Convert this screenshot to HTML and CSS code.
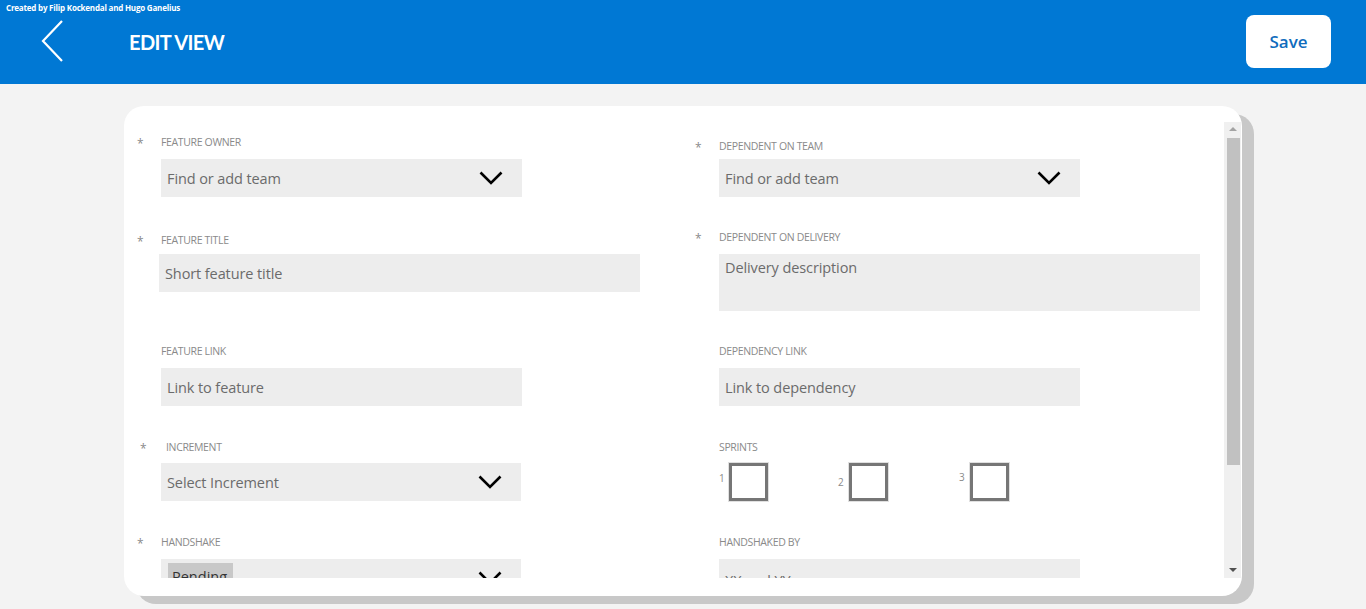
FILE: index.html
```html
<!DOCTYPE html>
<html>
<head>
<meta charset="utf-8">
<link rel="stylesheet" href="styles.css">
</head>
<body>
<header class="topbar">
  <div class="credit">Created by Filip Kockendal and Hugo Ganelius</div>
  <div class="topbar-row">
    <svg class="back" width="40" height="44" viewBox="0 0 40 44"><polyline points="21,1 2,21 21,41" fill="none" stroke="#fff" stroke-width="2.2"/></svg>
    <h1 class="title">EDIT VIEW</h1>
    <button class="save">Save</button>
  </div>
</header>
<main class="page">
  <section class="card">
    <div class="scroll">
      <div class="content">
        <div class="col">
          <div class="field f-owner">
            <div class="label-row"><span class="req">*</span><span class="label">FEATURE OWNER</span></div>
            <div class="box dd"><span class="ph">Find or add team</span><svg class="chev" width="24" height="14" viewBox="0 0 24 14"><polyline points="1.5,1.5 12,12 22.5,1.5" fill="none" stroke="#000" stroke-width="2.6"/></svg></div>
          </div>
          <div class="field f-title">
            <div class="label-row"><span class="req">*</span><span class="label">FEATURE TITLE</span></div>
            <div class="box wide shift"><span class="ph">Short feature title</span></div>
          </div>
          <div class="field f-link">
            <div class="label-row"><span class="req"></span><span class="label">FEATURE LINK</span></div>
            <div class="box"><span class="ph">Link to feature</span></div>
          </div>
          <div class="field f-inc">
            <div class="label-row"><span class="req req-inc">*</span><span class="label label-inc">INCREMENT</span></div>
            <div class="box dd narrow"><span class="ph">Select Increment</span><svg class="chev" width="24" height="14" viewBox="0 0 24 14"><polyline points="1.5,1.5 12,12 22.5,1.5" fill="none" stroke="#000" stroke-width="2.6"/></svg></div>
          </div>
          <div class="field f-hs">
            <div class="label-row"><span class="req">*</span><span class="label">HANDSHAKE</span></div>
            <div class="box dd narrow clip"><span class="chip">Pending</span><svg class="chev chev-hs" width="24" height="14" viewBox="0 0 24 14"><polyline points="1.5,1.5 12,12 22.5,1.5" fill="none" stroke="#000" stroke-width="2.6"/></svg></div>
          </div>
        </div>
        <div class="col">
          <div class="field r-team">
            <div class="label-row"><span class="req">*</span><span class="label">DEPENDENT ON TEAM</span></div>
            <div class="box dd"><span class="ph">Find or add team</span><svg class="chev" width="24" height="14" viewBox="0 0 24 14"><polyline points="1.5,1.5 12,12 22.5,1.5" fill="none" stroke="#000" stroke-width="2.6"/></svg></div>
          </div>
          <div class="field r-del">
            <div class="label-row"><span class="req">*</span><span class="label">DEPENDENT ON DELIVERY</span></div>
            <div class="box wide tall"><span class="ph">Delivery description</span></div>
          </div>
          <div class="field r-link">
            <div class="label-row"><span class="req"></span><span class="label">DEPENDENCY LINK</span></div>
            <div class="box"><span class="ph">Link to dependency</span></div>
          </div>
          <div class="field r-spr">
            <div class="label-row"><span class="req"></span><span class="label">SPRINTS</span></div>
            <div class="sprints">
              <div class="sprint s1"><span class="num">1</span><span class="check"></span></div>
              <div class="sprint s2"><span class="num">2</span><span class="check"></span></div>
              <div class="sprint s3"><span class="num">3</span><span class="check"></span></div>
            </div>
          </div>
          <div class="field r-hs">
            <div class="label-row"><span class="req"></span><span class="label">HANDSHAKED BY</span></div>
            <div class="box clip"><span class="ph ph-hs">XX and YY</span></div>
          </div>
        </div>
      </div>
      <div class="scrollbar">
        <span class="arrow up"></span>
        <span class="thumb"></span>
        <span class="spacer"></span>
        <span class="arrow down"></span>
      </div>
    </div>
  </section>
</main>
</body>
</html>
```

FILE: styles.css
```css
* { box-sizing: border-box; }
html, body { margin: 0; padding: 0; }
body {
  width: 1366px;
  height: 609px;
  overflow: hidden;
  background: #f3f3f3;
  font-family: "Open Sans", "Noto Sans", sans-serif;
}
.topbar {
  height: 84px;
  background: #0078d4;
  color: #fff;
  position: relative;
}
.credit {
  position: absolute;
  left: 6px;
  top: 2px;
  font-size: 8px;
  font-weight: 700;
  letter-spacing: -0.2px;
}
.topbar-row {
  display: flex;
  align-items: center;
  height: 84px;
  padding-left: 41px;
  padding-right: 35px;
}
.back { display: block; margin-top: 0; }
.title {
  margin: 0 0 0 48px;
  font-family: Lato, sans-serif;
  font-weight: 700;
  font-size: 20px;
  letter-spacing: -0.6px;
  flex: 1;
}
.save {
  width: 85px;
  height: 53px;
  margin-top: -1px;
  border: none;
  border-radius: 8px;
  background: #fff;
  color: #0f6cbd;
  font-family: "Open Sans", sans-serif;
  font-weight: 600;
  font-size: 17px;
  padding: 0;
}
.page { padding: 22px 0 0 124px; }
.card {
  width: 1118px;
  height: 490px;
  background: #fff;
  border-radius: 20px;
  box-shadow: 12px 8px 0 #c8c8c8;
  padding: 16px 1px 18px 0;
}
.scroll {
  display: flex;
  height: 456px;
}
.content {
  flex: 1;
  min-width: 0;
  overflow: hidden;
  display: flex;
  padding-left: 13px;
}
.col {
  width: 558px;
  flex: none;
  display: flex;
  flex-direction: column;
}
.field { display: flex; flex-direction: column; }
.label-row {
  height: 12px;
  display: flex;
  align-items: center;
  margin-bottom: 11px;
}
.req {
  width: 24px;
  color: #8a8a8a;
  font-size: 12px;
  line-height: 12px;
  padding-top: 4px;
}
.req-inc { width: 29px; padding-left: 3px; }
.label {
  font-size: 10.5px;
  color: #8a8a8a;
  letter-spacing: -0.35px;
  line-height: 12px;
}
.box {
  margin-left: 24px;
  width: 361px;
  height: 38px;
  background: #ededed;
  display: flex;
  align-items: center;
  padding-left: 6px;
  padding-right: 19px;
  position: relative;
}
.box.narrow { width: 360px; }
.box.wide { width: 481px; }
.box.shift { margin-left: 22px; }
.box.tall { height: 57px; align-items: flex-start; padding-top: 4px; }
.ph {
  font-size: 14.5px;
  color: #6b6b6b;
  flex: 1;
  letter-spacing: -0.1px;
}
.dd .chev { flex: none; }
.f-owner { margin-top: 14px; }
.f-title { margin-top: 37px; }
.f-title .label-row { margin-bottom: 8px; }
.f-link { margin-top: 53px; }
.f-inc { margin-top: 35px; }
.f-inc .label-row { margin-bottom: 10px; }
.f-hs { margin-top: 35px; }
.r-team { margin-top: 18px; }
.r-team .label-row { margin-bottom: 7px; }
.r-del { margin-top: 34px; }
.r-link { margin-top: 34px; }
.r-spr { margin-top: 35px; }
.r-spr .label-row { margin-bottom: 10px; }
.r-hs { margin-top: 35px; }
.clip { align-items: flex-start; padding-top: 4px; }
.chip {
  flex: none;
  width: 65px;
  height: 30px;
  margin-left: 1px;
  margin-right: auto;
  background: #c8c8c8;
  color: #333;
  font-size: 14.5px;
  padding: 4px 0 0 4px;
}
.chev-hs { margin-top: 8px; }
.ph-hs { padding-top: 8px; }
.sprints {
  margin-left: 24px;
  display: flex;
}
.sprint { display: flex; align-items: flex-start; }
.s2 { margin-left: 70px; }
.s3 { margin-left: 71px; }
.num {
  font-size: 10px;
  color: #8a8a8a;
  width: 10px;
  line-height: 12px;
  padding-top: 9px;
}
.s2 .num { width: 11px; padding-top: 13px; }
.s3 .num { width: 11px; padding-top: 8px; }
.check {
  width: 39px;
  height: 38px;
  border: 3px solid #767676;
  outline: 1px solid #e0e0e0;
  background: #fff;
}
.scrollbar {
  width: 17px;
  flex: none;
  background: #f0f0f0;
  display: flex;
  flex-direction: column;
  align-items: center;
}
.arrow {
  width: 0;
  height: 0;
  border-left: 4px solid transparent;
  border-right: 4px solid transparent;
}
.arrow.up {
  border-bottom: 4px solid #a3a3a3;
  margin-top: 5px;
  margin-bottom: 7px;
}
.arrow.down {
  border-top: 4px solid #505050;
  margin-bottom: 6px;
}
.thumb {
  width: 13px;
  height: 327px;
  background: #c1c1c1;
  margin-left: 2px;
}
.spacer { flex: 1; }
```
